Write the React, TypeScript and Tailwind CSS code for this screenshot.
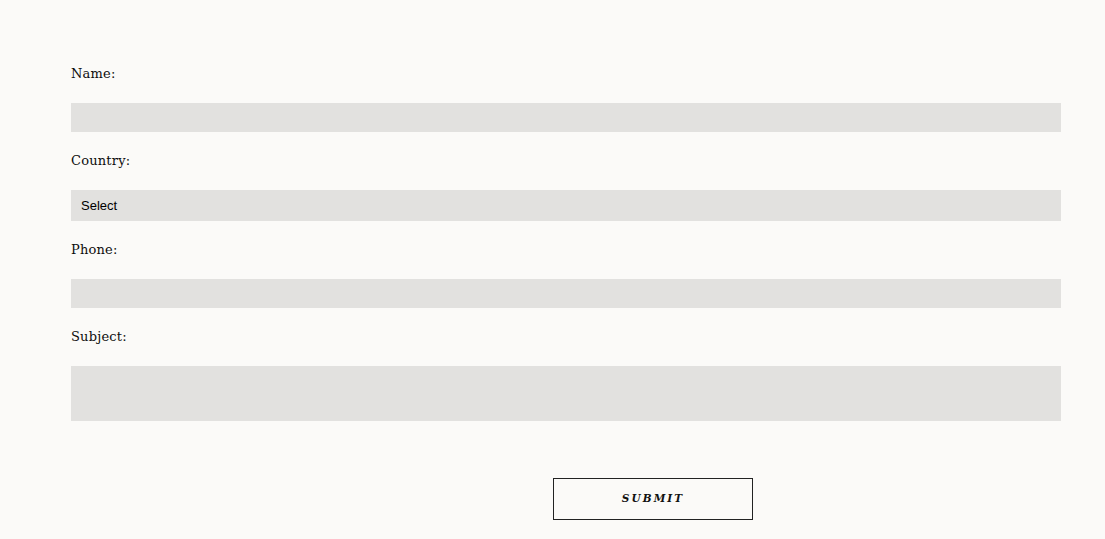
const serif = "font-['DejaVu_Serif','Liberation_Serif',serif]"

function Field({ label, children }: { label: string; children: React.ReactNode }) {
  return (
    <div className="flex flex-col">
      <label className={`${serif} text-[13px] leading-[22px] h-[20px] tracking-[0.2px] text-[#0d0d0d] mb-[20px]`}>
        {label}
      </label>
      {children}
    </div>
  )
}

export default function App() {
  return (
    <div className="min-h-[539px] w-full bg-[#fbfaf8]">
      <form className="flex flex-col pl-[71px] pr-[44px] pt-[63px]">
        <Field label="Name:">
          <input className="h-[29px] w-full bg-[#e2e1df] outline-none" />
        </Field>
        <div className="mt-[18px]">
          <Field label="Country:">
            <div className="h-[31px] w-full bg-[#e2e1df] flex items-center pt-[1px] px-[10px] font-['Liberation_Sans',Arial,sans-serif] text-[13px] text-black">
              Select
            </div>
          </Field>
        </div>
        <div className="mt-[18px]">
          <Field label="Phone:">
            <input className="h-[29px] w-full bg-[#e2e1df] outline-none" />
          </Field>
        </div>
        <div className="mt-[18px]">
          <Field label="Subject:">
            <textarea className="h-[55px] w-full bg-[#e2e1df] outline-none resize-none" />
          </Field>
        </div>
        <div className="mt-[57px] pl-[482px]">
          <button
            type="button"
            className={`${serif} h-[42px] w-[200px] border border-[#222] text-[10.5px] font-bold italic tracking-[2.1px] text-[#111]`}
          >
            SUBMIT
          </button>
        </div>
      </form>
    </div>
  )
}
